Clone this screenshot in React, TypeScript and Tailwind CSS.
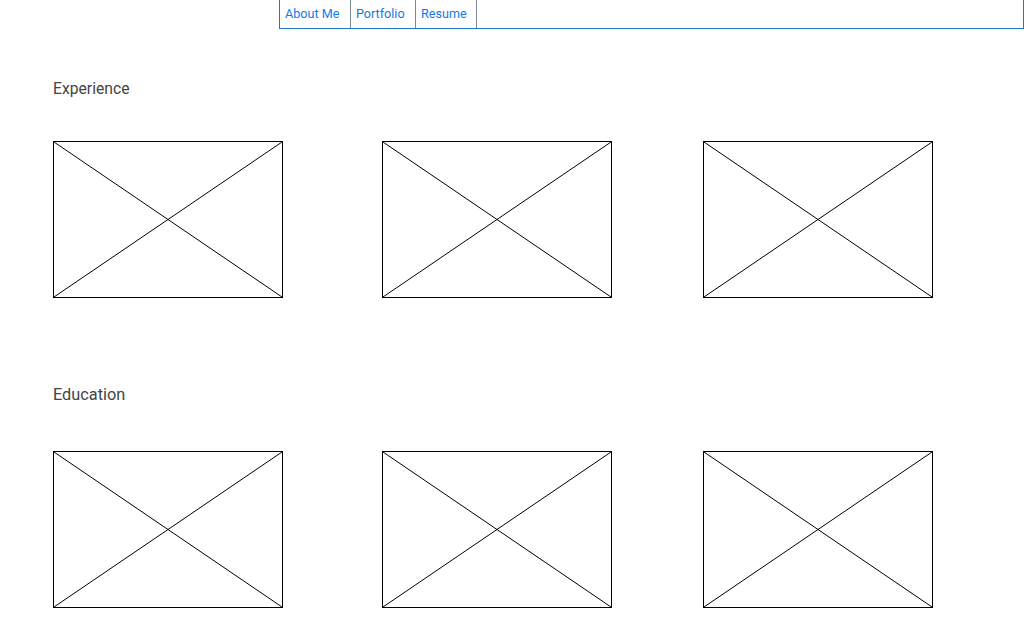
import * as React from "react"

const NAV_ITEMS = [
  { label: "About Me", width: "w-[71px]" },
  { label: "Portfolio", width: "w-[65px]" },
  { label: "Resume", width: "w-[61px]" },
]

function Placeholder() {
  return (
    <div className="h-[157px] w-[230px] border border-black">
      <svg width="228" height="155" viewBox="0 0 228 155" className="block">
        <line x1="0" y1="0" x2="228" y2="155" stroke="black" strokeWidth="1" />
        <line x1="228" y1="0" x2="0" y2="155" stroke="black" strokeWidth="1" />
      </svg>
    </div>
  )
}

function Section({
  title,
  className,
  titleClass,
  rowClass,
}: {
  title: string
  className?: string
  titleClass?: string
  rowClass?: string
}) {
  return (
    <section className={className}>
      <h2 className={`${titleClass} pl-[53px] leading-[24px] text-[#444]`}>{title}</h2>
      <div className={`${rowClass} flex pl-[53px]`}>
        <div className="w-[329px]">
          <Placeholder />
        </div>
        <div className="w-[321px]">
          <Placeholder />
        </div>
        <div>
          <Placeholder />
        </div>
      </div>
    </section>
  )
}

export default function App() {
  return (
    <div className="h-[638px] w-[1024px] overflow-hidden bg-white font-['Roboto',sans-serif]">
      {/* Top nav */}
      <nav className="ml-[279px] flex h-[29px] w-[745px] border border-t-0 border-[#1e78c8]">
        {NAV_ITEMS.map((item) => (
          <a
            key={item.label}
            href="#"
            className={`${item.width} flex h-full items-start border-r border-[#7a8a99] pl-[5px] pt-[5px] text-[12.6px] leading-[17px] text-[#1479e6]`}
          >
            {item.label}
          </a>
        ))}
      </nav>

      <Section
        title="Experience"
        className="mt-[48px]"
        titleClass="text-[15.7px]"
        rowClass="mt-[40px]"
      />
      <Section
        title="Education"
        className="mt-[85px]"
        titleClass="text-[16.3px]"
        rowClass="mt-[44px]"
      />
    </div>
  )
}
